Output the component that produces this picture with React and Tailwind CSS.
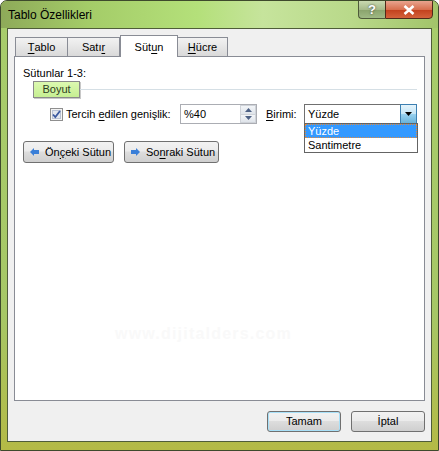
import React from "react";

const font = { fontFamily: '"Liberation Sans", Arial, sans-serif' };

const btn =
  "flex items-center justify-center rounded-[3px] border border-[#707070] bg-[linear-gradient(180deg,#f2f2f2_0%,#ebebeb_45%,#dddddd_50%,#cfcfcf_100%)] text-[11px] text-black";

function U({ children }) {
  return <span className="underline underline-offset-2">{children}</span>;
}

function Arrow({ dir }) {
  return (
    <svg width="9" height="8" viewBox="0 0 9 8">
      {dir === "left" ? (
        <path d="M0 4 L4 0 L4 2 L9 2 L9 6 L4 6 L4 8 Z" fill="#3a7fd8" />
      ) : (
        <path d="M9 4 L5 0 L5 2 L0 2 L0 6 L5 6 L5 8 Z" fill="#3a7fd8" />
      )}
    </svg>
  );
}

export default function App() {
  return (
    <div style={font} className="w-[439px] h-[451px] flex flex-col border border-[#3e4a2c] rounded-t-[7px] overflow-hidden bg-[linear-gradient(180deg,#a8cd6c_0%,#a6c766_70%,#b4ba46_100%)]">

      {/* Title bar */}
      <div className="h-[27px] flex justify-between pl-[7px] pr-[5px] bg-[linear-gradient(90deg,#8eaa59_0%,#a4cc68_20%,#b4e07a_45%,#c6e49c_60%,#b9d98a_80%,#a2c46a_100%)]">
        <span className="text-[12px] text-black pt-[5px]">Tablo Özellikleri</span>
        <div className="flex h-[19px] -mt-px">
          <div className="w-[27px] h-full flex items-center justify-center rounded-bl-[4px] border border-[#4e5a3a] border-r-0 bg-[linear-gradient(180deg,#c9d9b0_0%,#a6ba8a_50%,#8aa36c_52%,#9fb984_100%)]">
            <span className="text-white text-[13px] font-bold leading-none [text-shadow:0_0_2px_#333]">?</span>
          </div>
          <div className="w-[48px] h-full flex items-center justify-center rounded-br-[4px] border border-[#4e2a1a] bg-[linear-gradient(180deg,#e9a48f_0%,#d8704f_50%,#c2401d_52%,#d4623b_100%)]">
            <svg width="12" height="10" viewBox="0 0 12 10">
              <path d="M1.5 1 L10.5 9 M10.5 1 L1.5 9" stroke="#fff" strokeWidth="2.6" />
            </svg>
          </div>
        </div>
      </div>

      {/* Client area */}
      <div className="mx-[6px] h-[414px] border border-[#4f5d39] bg-[#f0f0f0] flex flex-col">

        {/* Tabs */}
        <div className="relative z-10 flex items-end h-[22px] mt-[6px] ml-[7px] -mb-px">
          <div className="w-[53px] h-[20px] border border-[#898c95] bg-[linear-gradient(180deg,#f2f2f2_0%,#e6e6e6_50%,#d9d9d9_100%)] flex items-center justify-center text-[11px]">
            <U>T</U>ablo
          </div>
          <div className="w-[52px] h-[20px] border border-l-0 border-[#898c95] bg-[linear-gradient(180deg,#f2f2f2_0%,#e6e6e6_50%,#d9d9d9_100%)] flex items-center justify-center text-[11px]">
            Satı<U>r</U>
          </div>
          <div className="w-[58px] h-[22px] border border-b-0 border-[#898c95] bg-white flex items-start justify-center pt-[3px] text-[11px]">
            Süt<U>u</U>n
          </div>
          <div className="w-[50px] h-[20px] border border-l-0 border-[#898c95] bg-[linear-gradient(180deg,#f2f2f2_0%,#e6e6e6_50%,#d9d9d9_100%)] flex items-center justify-center text-[11px]">
            <U>H</U>ücre
          </div>
        </div>

        {/* Panel */}
        <div className="relative ml-[6px] mr-[6px] h-[345px] border border-[#898c95] bg-white flex flex-col pl-[8px] pt-[10px] text-[11px]">
          <div className="h-[13px] leading-[13px]">Sütunlar 1-3:</div>

          <div className="flex items-center ml-[10px] mt-[1px] mr-[7px]">
            <div className="w-[47px] h-[17px] flex items-center justify-center border border-[#8a8a8a] shadow-[1px_1px_0_#c8c8c8] bg-[linear-gradient(180deg,#dcf9b0_0%,#c6ef92_100%)] text-[#2d3a22]">
              Boyut
            </div>
            <div className="flex-1 h-px bg-[#d5dfe5]" />
          </div>

          <div className="flex items-center h-[20px] mt-[6px]">
            <svg width="13" height="13" viewBox="0 0 13 13" className="ml-[27px]">
              <rect x="0.5" y="0.5" width="12" height="12" fill="#f4f4f4" stroke="#8f8f8f" />
              <rect x="2.5" y="2.5" width="8" height="8" fill="#e2e6ee" stroke="#b9c2d4" />
              <path d="M3 6.5 L5.3 9 L10 3" fill="none" stroke="#3c5aa0" strokeWidth="1.8" />
            </svg>
            <span className="ml-[3px] w-[114px]">Tercih <U>e</U>dilen genişlik:</span>
            <div className="w-[77px] h-[20px] border border-[#abadb3] bg-white flex items-center justify-between pl-[3px]">
              <span>%40</span>
              <div className="w-[16px] h-full flex flex-col">
                <div className="flex-1 flex items-center justify-center border border-[#cfd3d9] bg-[linear-gradient(180deg,#f3f5f8_0%,#dfe4ea_100%)]">
                  <svg width="7" height="4" viewBox="0 0 7 4"><path d="M0 4 L3.5 0 L7 4 Z" fill="#4d6185" /></svg>
                </div>
                <div className="flex-1 flex items-center justify-center border border-t-0 border-[#cfd3d9] bg-[linear-gradient(180deg,#f3f5f8_0%,#dfe4ea_100%)]">
                  <svg width="7" height="4" viewBox="0 0 7 4"><path d="M0 0 L3.5 4 L7 0 Z" fill="#4d6185" /></svg>
                </div>
              </div>
            </div>
            <span className="ml-[9px] w-[38px]"><U>B</U>irimi:</span>
            <div className="relative w-[113px] h-[20px] border border-[#707070] bg-white flex items-center justify-between pl-[3px]">
              <span>Yüzde</span>
              <div className="w-[17px] h-[20px] -mr-px flex items-center justify-center border border-[#3c7fb1] bg-[linear-gradient(180deg,#e5f4fc_0%,#c4e5f6_50%,#98d1ef_52%,#68b3db_100%)]">
                <svg width="7" height="4" viewBox="0 0 7 4"><path d="M0 0 L3.5 4 L7 0 Z" fill="#000" /></svg>
              </div>

              {/* Open list */}
              <div className="absolute left-[-1px] top-[18px] w-[114px] border border-[#646464] bg-white flex flex-col">
                <div className="h-[14px] leading-[12px] bg-[#3399ff] text-white pl-[2px] border border-dotted border-[#e58a3b]">Yüzde</div>
                <div className="h-[14px] leading-[14px] pl-[3px]">Santimetre</div>
              </div>
            </div>
          </div>

          <div className="flex gap-[10px] mt-[17px]">
            <div className={`${btn} w-[91px] h-[22px] justify-start pl-[6px] gap-[6px]`}>
              <Arrow dir="left" />
              <span>Ön<U>ç</U>eki Sütun</span>
            </div>
            <div className={`${btn} w-[95px] h-[22px] justify-start pl-[6px] gap-[6px]`}>
              <Arrow dir="right" />
              <span>So<U>n</U>raki Sütun</span>
            </div>
          </div>

          <div className="absolute left-[100px] top-[265px] text-[16px] font-bold tracking-[1.2px] text-[#f9f9f9]">
            www.dijitalders.com
          </div>
        </div>

        {/* Bottom buttons */}
        <div className="flex justify-end gap-[10px] mt-[10px] mr-[6px]">
          <div className={`${btn} w-[74px] h-[21px] border-[#3399dd] shadow-[inset_0_0_0_1px_#a8e0f8]`}>Tamam</div>
          <div className={`${btn} w-[74px] h-[21px]`}>İptal</div>
        </div>
      </div>
    </div>
  );
}
